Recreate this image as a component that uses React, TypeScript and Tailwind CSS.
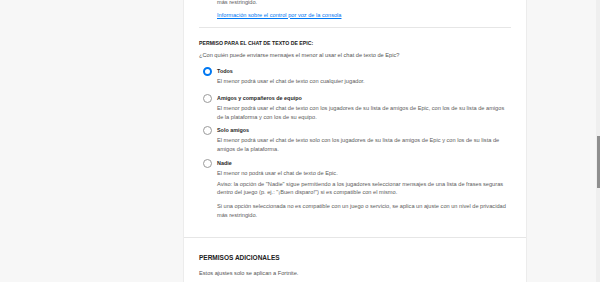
import React from "react";

const font = { fontFamily: '"Liberation Sans", Arial, sans-serif' };

function Radio({ selected }: { selected?: boolean }) {
  return selected ? (
    <div className="w-[9px] h-[9px] rounded-full border-[2.5px] border-[#0078f2] bg-white shrink-0" />
  ) : (
    <div className="w-[9px] h-[9px] rounded-full border border-[#9a9a9a] bg-white shrink-0" />
  );
}

function Option({
  selected,
  label,
  children,
  className,
}: {
  selected?: boolean;
  label: string;
  children: React.ReactNode;
  className?: string;
}) {
  return (
    <div className={"flex gap-[5px] pl-[4px] " + (className ?? "")}>
      <div className="h-[9px] flex items-center">
        <Radio selected={selected} />
      </div>
      <div className="flex flex-col">
        <div className="text-[5.4px] leading-[9px] font-bold text-[#262626] whitespace-nowrap">{label}</div>
        <div className="mt-[1px] text-[5.65px] leading-[9px] text-[#5c5c5c] whitespace-nowrap">{children}</div>
      </div>
    </div>
  );
}

export default function App() {
  return (
    <div className="w-[600px] h-[282px] overflow-hidden bg-[#f7f7f7] flex" style={font}>
      <div className="w-[183px] shrink-0" />
      <div className="w-[344px] shrink-0 bg-white border-l border-r border-[#ececec] flex flex-col">
        <div className="pl-[33px] mt-[-2.5px] text-[5.65px] leading-[9px] text-[#5c5c5c]">más restringido.</div>
        <div className="pl-[33px] mt-[4px] text-[5.65px] leading-[9px] text-[#0078f2] underline">
          Información sobre el control por voz de la consola
        </div>
        <div className="mx-[15px] mt-[7.5px] h-px bg-[#e6e6e6]" />
        <div className="px-[15px] flex flex-col">
          <div className="mt-[10.5px] text-[5.2px] leading-[9px] font-bold text-[#202020]">
            PERMISO PARA EL CHAT DE TEXTO DE EPIC:
          </div>
          <div className="mt-[3.5px] text-[5.65px] leading-[9px] text-[#555555]">
            ¿Con quién puede enviarse mensajes el menor al usar el chat de texto de Epic?
          </div>
          <div className="mt-[6.5px] flex flex-col">
            <Option selected label="Todos">
              El menor podrá usar el chat de texto con cualquier jugador.
            </Option>
            <Option label="Amigos y compañeros de equipo" className="mt-[8px]">
              El menor podrá usar el chat de texto con los jugadores de su lista de amigos de Epic, con los de su lista de amigos
              <br />
              de la plataforma y con los de su equipo.
            </Option>
            <Option label="Solo amigos" className="mt-[4px]">
              El menor podrá usar el chat de texto solo con los jugadores de su lista de amigos de Epic y con los de su lista de
              <br />
              amigos de la plataforma.
            </Option>
            <Option label="Nadie" className="mt-[5px]">
              El menor no podrá usar el chat de texto de Epic.
              <div className="mt-[2px] leading-[8.5px]">
                Aviso: la opción de "Nadie" sigue permitiendo a los jugadores seleccionar mensajes de una lista de frases seguras
                <br />
                dentro del juego (p. ej.: "¡Buen disparo!") si es compatible con el mismo.
              </div>
              <div className="mt-[5px]">
                Si una opción seleccionada no es compatible con un juego o servicio, se aplica un ajuste con un nivel de privacidad
                <br />
                más restringido.
              </div>
            </Option>
          </div>
        </div>
        <div className="mt-[17px] h-px bg-[#e6e6e6]" />
        <div className="px-[15px] flex flex-col">
          <div className="mt-[15px] text-[6.5px] leading-[10px] font-bold text-[#202020]">PERMISOS ADICIONALES</div>
          <div className="mt-[6px] text-[5.65px] leading-[9px] text-[#555555]">Estos ajustes solo se aplican a Fortnite.</div>
        </div>
      </div>
      <div className="w-[69px] shrink-0" />
      <div className="w-[4px] shrink-0 bg-[#efefef] flex flex-col">
        <div className="mt-[136px] ml-[1px] w-[3px] h-[52px] bg-[#8f8f8f]" />
      </div>
    </div>
  );
}
